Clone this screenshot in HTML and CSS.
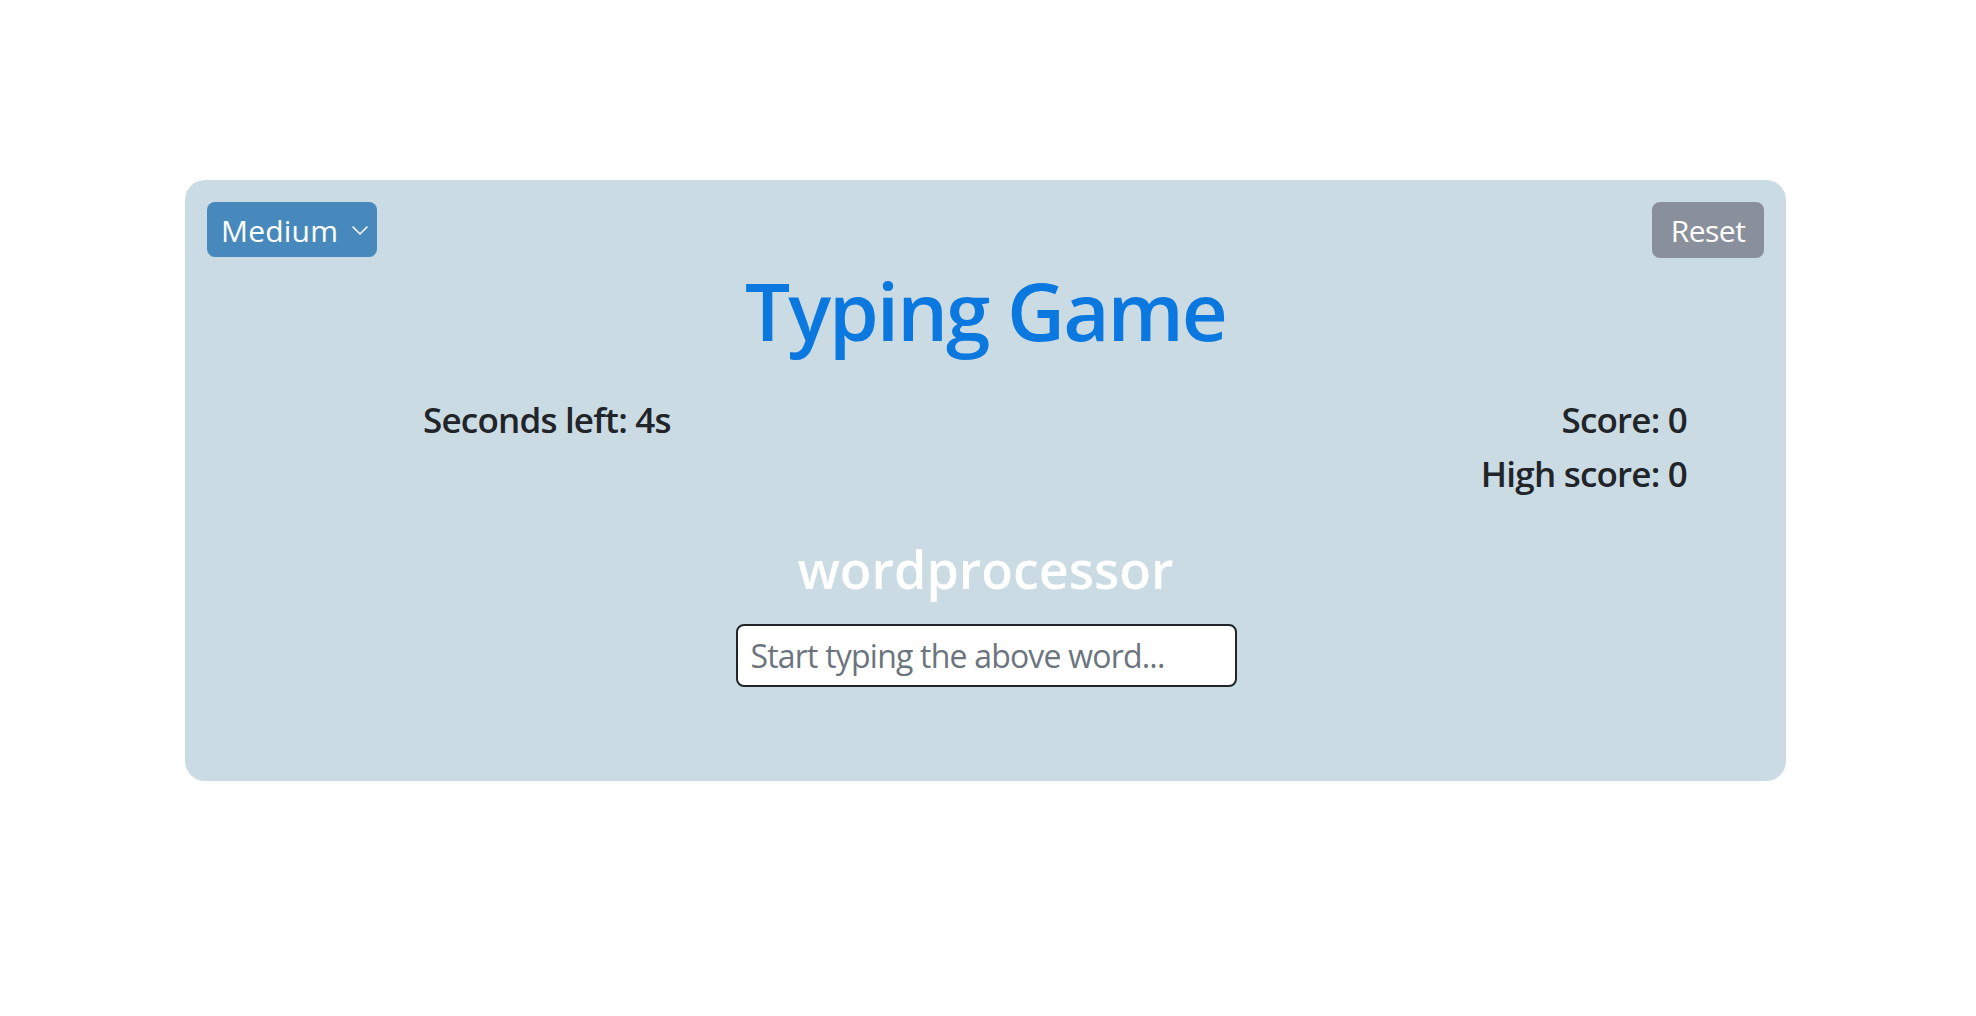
FILE: index.html
```html
<!DOCTYPE html>
<html lang="en">
<head>
<meta charset="utf-8">
<title>Typing Game</title>
<link rel="stylesheet" href="styles.css">
</head>
<body>
<main class="card">
  <div class="toolbar">
    <div class="select-wrap">
      <select class="difficulty">
        <option>Easy</option>
        <option selected>Medium</option>
        <option>Hard</option>
      </select>
      <svg class="chevron" width="16" height="9" viewBox="0 0 16 9" aria-hidden="true"><path d="M1 1 L8 8 L15 1" fill="none" stroke="#fff" stroke-width="1.6" stroke-linecap="round" stroke-linejoin="round"/></svg>
    </div>
    <button class="reset">Reset</button>
  </div>
  <h1 class="title">Typing Game</h1>
  <div class="stats">
    <div class="stat-left">Seconds left: 4s</div>
    <div class="stat-right">
      <div>Score: 0</div>
      <div>High score: 0</div>
    </div>
  </div>
  <div class="word">wordprocessor</div>
  <div class="input-row">
    <input class="answer" type="text" placeholder="Start typing the above word..." autofocus>
  </div>
</main>
</body>
</html>
```
FILE: styles.css
```css
html, body {
  margin: 0;
  padding: 0;
  background: #ffffff;
}
body {
  font-family: "Open Sans", "Noto Sans", sans-serif;
  color: #212529;
}
.card {
  box-sizing: border-box;
  width: 1601px;
  height: 601px;
  margin: 180px 0 0 185px;
  padding: 22px;
  background: #cbdbe3;
  border-radius: 20px;
}
.toolbar {
  display: flex;
  justify-content: space-between;
  align-items: flex-start;
  height: 56px;
}
.select-wrap {
  position: relative;
  width: 170px;
  height: 55px;
}
.difficulty {
  appearance: none;
  -webkit-appearance: none;
  box-sizing: border-box;
  width: 170px;
  height: 55px;
  padding: 1px 0 0 14px;
  border: none;
  border-radius: 8px;
  background: #4789bc;
  color: #ffffff;
  font-family: inherit;
  font-size: 30px;
  letter-spacing: 0.2px;
  outline: none;
}
.chevron {
  position: absolute;
  left: 145px;
  top: 24px;
  pointer-events: none;
}
.reset {
  box-sizing: border-box;
  width: 112px;
  height: 56px;
  padding: 1px 0 0;
  border: none;
  border-radius: 8px;
  background: #8a909b;
  color: #ffffff;
  font-family: inherit;
  font-size: 30px;
  letter-spacing: -0.5px;
}
.title {
  margin: 4px 0 0;
  font-size: 80px;
  line-height: 96px;
  font-weight: 600;
  text-align: center;
  color: #0b78e0;
  letter-spacing: -2px;
}
.stats {
  display: flex;
  justify-content: space-between;
  margin: 35px 77px 0 216px;
  font-size: 35px;
  line-height: 54px;
  font-weight: 600;
  letter-spacing: -0.8px;
}
.stat-right {
  text-align: right;
}
.word {
  margin-top: 37px;
  font-size: 52px;
  line-height: 62px;
  font-weight: 600;
  color: #ffffff;
  text-align: center;
  letter-spacing: 0;
}
.input-row {
  display: flex;
  justify-content: center;
  margin-top: 24px;
  padding-left: 1px;
}
.answer {
  box-sizing: border-box;
  width: 501px;
  height: 63px;
  padding: 0 13px;
  border: 2px solid #212529;
  border-radius: 8px;
  background: #ffffff;
  font-family: inherit;
  font-size: 32px;
  letter-spacing: -0.8px;
  color: #212529;
  outline: none;
}
.answer::placeholder {
  color: #6c757d;
}
```
